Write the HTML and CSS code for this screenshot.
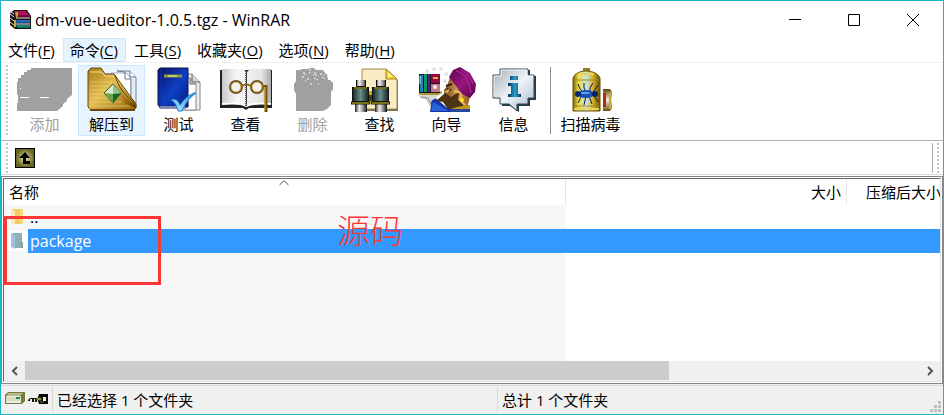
FILE: index.html
```html
<!DOCTYPE html>
<html lang="zh-CN">
<head>
<meta charset="utf-8">
<meta name="viewport" content="width=device-width, initial-scale=1">
<title>dm-vue-ueditor-1.0.5.tgz - WinRAR</title>
<link rel="stylesheet" href="styles.css">
</head>
<body>
<svg class="defs" width="0" height="0" aria-hidden="true">
  <defs>
    <linearGradient id="gold" x1="0" y1="0" x2="1" y2="1"><stop offset="0" stop-color="#a87a14"/><stop offset=".45" stop-color="#e3bf55"/><stop offset="1" stop-color="#8f640a"/></linearGradient>
    <linearGradient id="flap" x1="0" y1="0" x2="1" y2="0"><stop offset="0" stop-color="#e8c660"/><stop offset=".5" stop-color="#a87412"/><stop offset="1" stop-color="#5e3b00"/></linearGradient>
    <linearGradient id="blue" x1="0" y1="0" x2="1" y2="1"><stop offset="0" stop-color="#0a1568"/><stop offset=".55" stop-color="#0d3fc4"/><stop offset="1" stop-color="#071a80"/></linearGradient>
    <linearGradient id="tick" x1="0" y1="1" x2="1" y2="0"><stop offset="0" stop-color="#c5ecff"/><stop offset="1" stop-color="#1589dd"/></linearGradient>
    <linearGradient id="page" x1="0" y1="0" x2="1" y2="0"><stop offset="0" stop-color="#c9c9c9"/><stop offset=".3" stop-color="#f6f6f6"/><stop offset=".8" stop-color="#e6e6e6"/><stop offset="1" stop-color="#aaa"/></linearGradient>
    <linearGradient id="metal" x1="0" y1="0" x2="1" y2="0"><stop offset="0" stop-color="#222"/><stop offset=".35" stop-color="#eee"/><stop offset=".6" stop-color="#aaa"/><stop offset="1" stop-color="#111"/></linearGradient>
    <linearGradient id="teal" x1="0" y1="0" x2="1" y2="0"><stop offset="0" stop-color="#182c2d"/><stop offset=".5" stop-color="#6b8d8c"/><stop offset="1" stop-color="#172829"/></linearGradient>
    <linearGradient id="tank" x1="0" y1="0" x2="1" y2="0"><stop offset="0" stop-color="#78620b"/><stop offset=".2" stop-color="#eedc3c"/><stop offset=".5" stop-color="#cce2e1"/><stop offset=".75" stop-color="#d6ae20"/><stop offset="1" stop-color="#665008"/></linearGradient>
    <linearGradient id="cap" x1="0" y1="0" x2="0" y2="1"><stop offset="0" stop-color="#5d4708"/><stop offset=".5" stop-color="#eef1e4"/><stop offset="1" stop-color="#6b5209"/></linearGradient>
    <linearGradient id="silver" x1="0" y1="0" x2="1" y2="1"><stop offset="0" stop-color="#a5adb5"/><stop offset=".5" stop-color="#eef3f9"/><stop offset="1" stop-color="#a9b9cc"/></linearGradient>
    <linearGradient id="info" x1="0" y1="0" x2="1" y2="0"><stop offset="0" stop-color="#052e58"/><stop offset=".55" stop-color="#27a2ca"/><stop offset="1" stop-color="#07385d"/></linearGradient>
    <linearGradient id="hat" x1="0" y1="0" x2="1" y2="1"><stop offset="0" stop-color="#5f0650"/><stop offset=".5" stop-color="#96157d"/><stop offset="1" stop-color="#570449"/></linearGradient>
    <linearGradient id="skin" x1="0" y1="0" x2="1" y2="0"><stop offset="0" stop-color="#6e4a1c"/><stop offset=".5" stop-color="#d09544"/><stop offset="1" stop-color="#8f611f"/></linearGradient>
    <radialGradient id="olive"><stop offset="0" stop-color="#f0edae"/><stop offset="1" stop-color="#676321"/></radialGradient>
  </defs>
</svg>

<div class="window">
  <header class="titlebar">
    <svg class="app-icon" viewBox="0 0 21 20" aria-hidden="true">
      <path d="M4 0h13l4 6v13H5L0 15V3z" fill="#181515"/>
      <path d="M4 1h12l3 4H7z" fill="#b11358"/><path d="M7 5h13v2H7z" fill="#7d003b"/>
      <path d="M6 8h14" stroke="#e6e1e1"/><path d="M6 10h14v3H6z" fill="#174c9b"/><path d="M7 11h13" stroke="#328ed0"/>
      <path d="M6 14h14" stroke="#e4eee9"/><path d="M6 15h14v3H7z" fill="#08665d"/><path d="M7 16h13" stroke="#20a391"/>
      <path d="M0 4l4 3M0 8l4 3M0 12l4 3M1 2l3 2" stroke="#e3dcd5"/><path d="M5 2h3v4l-2 2zM4 10h2v7H4z" fill="#c1aa31"/>
    </svg>
    <h1 class="title">dm-vue-ueditor-1.0.5.tgz - WinRAR</h1>
    <div class="window-controls">
      <button type="button" aria-label="最小化"><svg viewBox="0 0 12 12"><path d="M0 5.500h12"/></svg></button>
      <button type="button" aria-label="最大化"><svg viewBox="0 0 12 12"><path d="M.5.5h11v11H.5z"/></svg></button>
      <button type="button" aria-label="关闭"><svg viewBox="0 0 12 12"><path d="M0 0l12 12M12 0L0 12"/></svg></button>
    </div>
  </header>

  <nav class="menu" aria-label="菜单">
    <button type="button">文件(<u>F</u>)</button>
    <button type="button" class="active">命令(<u>C</u>)</button>
    <button type="button">工具(<u>S</u>)</button>
    <button type="button">收藏夹(<u>O</u>)</button>
    <button type="button">选项(<u>N</u>)</button>
    <button type="button">帮助(<u>H</u>)</button>
  </nav>

  <div class="toolbar" role="toolbar">
    <span class="grip"></span>
    <button type="button" class="tool" disabled>
      <svg viewBox="0 0 66 46"><path d="M19 1h41v27l-5 4v2l-4 3v2l-6 5H5v-7l1-2v-6l-1-3V15h1v-4h3V8h3V5h3V3h4z" fill="#a0a0a0"/><path d="M8 30.500h9M28 30.500h9M8 21.500h1" stroke="#fff"/></svg>
      <span>添加</span>
    </button>
    <button type="button" class="tool hover">
      <svg viewBox="0 0 66 46">
        <path d="M32 6h15l5 6v28H32z" fill="#fff" stroke="#9aa5b1"/><path d="M38 4h13l6 6v30h-5V12l-6-7z" fill="#e5edf6" stroke="#738393"/><path d="M51 4v6h6M46 5v7h6" fill="#fff" stroke="#6b7783"/>
        <path d="M9 4l3-3h10l4 6h9l22 30v4l-3 2H12l-3-3z" fill="url(#gold)" stroke="#684809"/>
        <path d="M11 5h12l3 4h9" stroke="#f8df88" fill="none"/><path d="M11 15h22M11 19h18M11 23h15M11 27h15M11 31h18M11 35h31M11 39h40" stroke="#fbe28a" opacity=".5"/>
        <path d="M35 9c2 11 9 22 22 29v3l-11-4-12-15z" fill="url(#flap)"/><path d="M36 8c3 12 10 21 21 29" fill="none" stroke="#603c00"/>
        <path d="M25 26l9-9 8 9-8 10z" fill="#dcead2" stroke="#3c5b28"/><path d="M34 17l8 9-8 1z" fill="#8fc48b"/><path d="M34 27l8-1-8 10z" fill="#126629"/><path d="M26 26l8 1v9z" fill="#6ca63f"/>
        <path d="M11 43h45" stroke="#6a4709" stroke-width="2"/>
      </svg>
      <span>解压到</span>
    </button>
    <button type="button" class="tool">
      <svg viewBox="0 0 66 46">
        <path d="M37 7h9l8 8v28H37z" fill="#ededed" stroke="#888"/><path d="M35 11h9l6 6v26H35z" fill="#fff" stroke="#888"/><path d="M44 11v6h6M46 7v8h8" fill="#d6d6d6" stroke="#666"/>
        <path d="M12 3l2-2h28v39H14l-2-2z" fill="url(#blue)" stroke="#07104d"/><path d="M15 2v37" stroke="#1733a8"/><path d="M13 39h27v2H14z" fill="#e8eafa" stroke="#1a2470"/>
        <path d="M18 9h18" stroke="#8f9b35" stroke-width="3"/><path d="M22 9h9" stroke="#f8ffa5"/>
        <path d="M25 33c4-2 7 0 9 5 4-6 9-10 14-12h2c-7 5-11 11-14 18h-4c-1-5-3-9-7-11z" fill="url(#tick)" stroke="#1b80cf"/>
      </svg>
      <span>测试</span>
    </button>
    <button type="button" class="tool">
      <svg viewBox="0 0 66 46">
        <path d="M7 3h52v38H36l-3 2-3-2H7z" fill="#222"/><path d="M9 2h22l2 3v33c-6-2-14-1-24-1zM34 5l3-3h21v35c-10 0-18-1-24 1z" fill="url(#page)"/>
        <path d="M9 37c10-1 19-1 24 2 7-3 15-3 25-2" fill="none" stroke="#fff" stroke-width="2"/>
        <path d="M33 4v36" stroke="#555" stroke-width="2" stroke-dasharray="1 1"/>
        <g fill="#f2f2f2" stroke="#625125" stroke-width="2"><circle cx="23" cy="20" r="6"/><circle cx="44" cy="20" r="6"/></g><circle cx="23" cy="20" r="5" fill="none" stroke="#d2a326"/><circle cx="44" cy="20" r="5" fill="none" stroke="#d2a326"/>
        <path d="M29 19c3-2 6-2 9 0M50 19h4" fill="none" stroke="#8c6610" stroke-width="2"/><path d="M53 18v27" stroke="#785006" stroke-width="3"/><path d="M52 20v22" stroke="#d8ae30"/>
      </svg>
      <span>查看</span>
    </button>
    <button type="button" class="tool" disabled>
      <svg viewBox="0 0 66 46"><path d="M16 3h5V2h7l2-1h4l2 2h7l3 4h1l1 6h2l3 3v6l-2 3v13l-4 4-4 2H16V27l-2-4v-6l2-3z" fill="#a0a0a0"/><path d="M23 6h2v2M29 3h3M29 5l2 2M35 5v3h2M22 10h2M27 12h3M34 11l4 2M40 7h3M42 10l3 2M30 17h2M38 17h1M33 8h1M44 8h1M25 14h1" fill="none" stroke="#fff" stroke-dasharray="2 1"/></svg>
      <span>删除</span>
    </button>
    <button type="button" class="tool">
      <svg viewBox="0 0 66 46">
        <path d="M17 4l3 40h31V13" fill="#756d53"/><path d="M15 2h24l11 10v30H15z" fill="#f9ecc4" stroke="#9c8a54"/><path d="M39 2v10h11z" fill="#f7d52c" stroke="#a58511"/><path d="M41 5v5h5" fill="#fff29a"/>
        <path d="M20 24h8v13h-8z" fill="#c4ac18"/><path d="M21 28h6v6h-6z" fill="#423e17"/>
        <g id="lens"><path d="M9 13h10v7h3v16H5V20h4z" fill="#10100e"/><path d="M10 13h8v6h-8zM8 37h12v8H8z" fill="url(#metal)"/><path d="M6 22h15v12H6z" fill="url(#teal)"/><path d="M4 36h19" stroke="#1c1a08" stroke-width="3"/><path d="M5 36h17M7 21h13" stroke="#d7c728"/></g>
        <use href="#lens" x="20"/>
      </svg>
      <span>查找</span>
    </button>
    <button type="button" class="tool">
      <svg viewBox="0 0 66 46">
        <g fill="#e6e6e6"><circle cx="13" cy="4" r="2"/><circle cx="20" cy="2" r="2"/><circle cx="27" cy="2" r="2"/><circle cx="32" cy="7" r="2"/><circle cx="31" cy="14" r="2"/></g>
        <path d="M18 29l6 4 9 8 6-5 17 3v6H16z" fill="#1434a8"/><path d="M19 35l9 5 7 4H17z" fill="#2b62d8"/>
        <path d="M4 27l5-1 8 1h9l-4 4-5 3v8l-5-9-6-2z" fill="#d7d7d3"/><path d="M7 30l7 1 3 7" fill="none" stroke="#8e8e86"/>
        <path d="M5 26l3 1h16l4-2" fill="none" stroke="#aa9738" stroke-width="2"/>
        <path d="M5 7h21v19H5z" fill="#14181c"/><path d="M6 8h3v17H6z" fill="#2c7fb4"/><path d="M10 7h3v18h-3z" fill="#0a9a5f"/><path d="M14 7h2v18h-2z" fill="#5c1b8f"/><path d="M17 7h9v9h-9z" fill="#98073e"/><path d="M17 17h9v8h-9z" fill="#bd7b8c"/><path d="M19 11h5" stroke="#d2bd35" stroke-width="2"/><circle cx="21" cy="20" r="2" fill="#f4eaea"/><path d="M6 9v8" stroke="#b8e2ee"/>
        <path d="M36 10l20 20-3 11-16 2-6-9-1-11 3-4z" fill="url(#skin)"/>
        <path d="M31 26l6 4 8-5-1 8 6 5-8 5-9-2-4-6-7-1z" fill="#4d3413"/><path d="M40 24l8 2-2 7 5 5" fill="none" stroke="#efb967" stroke-width="2"/><path d="M32 19l6-2M33 22l4 1" stroke="#332111" stroke-width="2"/><path d="M30 25l4 1 2-5" fill="#e1ae56"/>
        <path d="M35 10l4-7 7-3 10 6 6 11-1 8-5 6-8-4z" fill="url(#hat)"/><path d="M42 4c9 2 13 10 15 22M47 3c6 3 10 8 12 14" stroke="#b22d98" fill="none"/>
        <circle cx="48" cy="33" r="2" fill="#ffe329"/><path d="M37 42l6-2 13-2v4z" fill="#c59a14"/><path d="M36 42h20v3H36z" fill="#2546a3"/>
      </svg>
      <span>向导</span>
    </button>
    <button type="button" class="tool">
      <svg viewBox="0 0 66 46">
        <path d="M21 3h28v6h6v24h-6v6H38v6l-9-6h-8z" fill="#203c48"/><path d="M19 2h28v6h6v23h-6v6H36v7l-8-7h-9v-6h-7V8h7z" fill="url(#silver)" stroke="#324850"/><path d="M13 30V9h7V3h26v6h6" fill="none" stroke="#fff" opacity=".8"/>
        <path d="M29 9h8v4h-8zM27 16h10v11h3v3H27v-3h3v-8h-3z" fill="url(#info)"/>
      </svg>
      <span>信息</span>
    </button>
    <span class="separator"></span>
    <button type="button" class="tool">
      <svg viewBox="0 0 66 46">
        <path d="M25 1h7v5h-7z" fill="#9c8014"/><path d="M15 12c0-4 5-8 13-8s14 4 14 8v32H15z" fill="url(#tank)" stroke="#655308"/><path d="M20 7h16M16 42h25" stroke="#e8d55c" stroke-width="2"/><path d="M16 13h25M16 39h25" stroke="#9b8a28"/>
        <path d="M20 17l2 5 3 3M26 16v5l2 4M35 16l-3 5v5M40 18l-5 7M20 36l3-6 3-2M26 38l2-9M34 37l-3-8M40 35l-4-6" fill="none" stroke="#0a1c5c"/>
        <ellipse cx="28" cy="27" rx="8" ry="4" fill="#1a4fb7"/><ellipse cx="27" cy="26" rx="5" ry="1" fill="#5ca6e3"/><circle cx="37" cy="27" r="3" fill="#092265"/><circle cx="20" cy="27" r="3" fill="#0a286d"/>
        <path d="M45 22h7l2 3v16l-2 3h-7z" fill="url(#cap)"/><path d="M45 26h3v14h-3z" fill="#b4271c"/><path d="M52 25v17" stroke="#c8a72c" stroke-width="2"/>
      </svg>
      <span>扫描病毒</span>
    </button>
  </div>

  <div class="address">
    <span class="grip"></span>
    <button type="button" class="up" aria-label="向上"><svg viewBox="0 0 20 20"><path d="M0 0h20v20H0z"/><path d="M1 1h18v18H1z" fill="url(#olive)"/><path d="M10 4L4 10h4v6h7v-3h-4v-3h4z"/></svg></button>
    <input class="path" type="text" aria-label="路径">
    <span class="grip"></span>
  </div>

  <main class="frame">
    <div class="list">
      <table class="files">
        <colgroup><col class="col-name"><col><col class="col-packed"></colgroup>
        <thead>
          <tr>
            <th scope="col">名称<svg class="sort" viewBox="0 0 10 6" aria-hidden="true"><path d="M.5 5L5 .7 9.500 5"/></svg></th>
            <th scope="col" class="number">大小</th>
            <th scope="col" class="packed">压缩后大小</th>
          </tr>
        </thead>
        <tbody>
          <tr>
            <td><div class="file"><svg class="folder" viewBox="0 0 20 20" aria-hidden="true"><path d="M4 2h10v15H6z" fill="#f3cc65"/><path d="M12 2h3v15h-3z" fill="#f6d87d"/><path d="M3 2l4 2v14l-4-2z" fill="#ffe9a6"/></svg><span class="name">..</span></div></td><td></td><td></td>
          </tr>
          <tr class="selected">
            <td><div class="file"><svg class="folder" viewBox="0 0 20 20" aria-hidden="true"><path d="M4 2h10v15H6z" fill="#8eb1b1"/><path d="M12 11h3v6h-3z" fill="#84aaa6"/><path d="M3 2l4 2v14l-4-2z" fill="#9fc5de"/></svg><span class="name">package</span></div></td><td></td><td></td>
          </tr>
          <tr class="filler"><td></td><td></td><td></td></tr>
        </tbody>
      </table>
      <div class="scrollbar">
        <button type="button" aria-label="向左滚动"><svg viewBox="0 0 8 10"><path d="M6 1L2 5l4 4"/></svg></button>
        <div class="track"><div class="thumb"></div></div>
        <button type="button" aria-label="向右滚动"><svg viewBox="0 0 8 10"><path d="M2 1l4 4-4 4"/></svg></button>
      </div>
    </div>
    <div class="mark-box"></div>
    <div class="mark-text">源码</div>
  </main>

  <footer class="status">
    <div class="status-icons">
      <svg class="drive" viewBox="0 0 20 13" aria-hidden="true"><path d="M0 3l3-3h17v9l-3 3H0z" fill="#777a3d"/><path d="M1 4h15v7H1z" fill="#d9dbbd"/><path d="M2 4h13M2 10h14" stroke="#fff"/><path d="M3 1h15l-2 2H2z" fill="#b8bc86"/><path d="M11 6h4" stroke="#198b67" stroke-width="2"/></svg>
      <svg class="key" viewBox="0 0 20 10" aria-hidden="true"><path d="M11 0h9v10h-9l-1-3V3z" fill="#080808"/><path d="M15 3h3v4h-3z" fill="#eee"/><path d="M10 4H2L0 6v1h2V5h2v3h2V5h1v3h2V6h2z" fill="#171706"/><path d="M9 4h4v2H9zM12 8h4" fill="#b5b165" stroke="#77742c"/></svg>
    </div>
    <div class="status-cell selected-count">已经选择 1 个文件夹</div>
    <div class="status-cell">总计 1 个文件夹</div>
    <svg class="resize" viewBox="0 0 11 11" aria-hidden="true"><path d="M8 0h3v3H8zM4 4h3v3H4zM8 4h3v3H8zM0 8h3v3H0zM4 8h3v3H4zM8 8h3v3H8z"/></svg>
  </footer>
</div>
</body>
</html>
```
FILE: styles.css
```css
* {
  box-sizing: border-box;
}

body {
  margin: 0;
  font: 15px/20px "Open Sans", "Noto Sans CJK SC", sans-serif;
  color: #000;
  background: #fff;
}

button {
  margin: 0;
  padding: 0;
  border: 0;
  background: none;
  font: inherit;
  color: inherit;
}

svg {
  display: block;
}

.defs {
  position: absolute;
}

.window {
  display: flex;
  flex-direction: column;
  min-height: 100vh;
  border: 1px solid #1cb5c1;
}

.titlebar {
  display: flex;
  align-items: center;
  height: 37px;
  padding: 0 1px 0 9px;
}

.app-icon {
  width: 21px;
  height: 20px;
}

.title {
  flex: 1;
  margin: 0 0 0 4px;
  font-size: 16px;
  font-weight: 400;
}

.window-controls {
  display: flex;
  align-self: stretch;
}

.window-controls button {
  display: grid;
  place-items: center;
  width: 59px;
}

.window-controls svg {
  width: 12px;
  height: 12px;
  fill: none;
  stroke: #000;
}

.menu {
  display: flex;
  gap: 1px;
  height: 24px;
}

.menu button {
  padding: 0 6px;
  border: 1px solid transparent;
}

.menu button + button {
  padding-right: 7px;
}

.menu u {
  text-underline-offset: 2px;
}

.menu .active {
  border-color: #cce8ff;
  background: #e5f3ff;
}

.toolbar {
  display: flex;
  padding: 2px 0 4px 3px;
  border-top: 1px solid #f0f0f0;
  border-bottom: 1px solid #b0b0b0;
}

.grip {
  width: 4px;
  margin-right: 3px;
  background: conic-gradient(#c4c4c4 0 25%, transparent 0) 0 0 / 4px 4px;
}

.tool {
  display: flex;
  flex-direction: column;
  align-items: center;
  width: 67px;
  height: 71px;
  padding-top: 1px;
  border: 1px solid transparent;
}

.tool svg {
  width: 66px;
  height: 46px;
}

.tool span {
  margin-top: 1px;
  white-space: nowrap;
}

.tool:disabled {
  color: #a0a0a0;
}

.tool.hover {
  border-color: #cce8ff;
  background: #e8f4ff;
}

.separator {
  width: 1px;
  margin: 2px 6px 2px 3px;
  background: #8d8d8d;
}

.address {
  display: flex;
  height: 34px;
  padding: 2px 0 1px 3px;
  border-bottom: 1px solid #dcdcdc;
}

.up {
  align-self: center;
  margin: 0 2px 0 4px;
}

.up svg {
  width: 20px;
  height: 20px;
}

.path {
  flex: 1;
  min-width: 0;
  margin-right: 2px;
  border: 0;
  border-right: 1px solid #b0b0b0;
  outline: 0;
  font: inherit;
}

.address .grip:last-child {
  margin-right: 4px;
}

.frame {
  position: relative;
  display: flex;
  flex: 1;
  margin-top: 1px;
  padding: 1px;
  border: 1px solid #828790;
}

.list {
  display: flex;
  flex: 1;
  flex-direction: column;
  min-width: 0;
  border: 1px solid #e3e3e3;
  border-top-color: #696969;
  border-left-color: #696969;
}

.files {
  width: 100%;
  height: 182px;
  table-layout: fixed;
  border-collapse: collapse;
}

.col-name {
  width: 60%;
}

.col-packed {
  width: 10%;
}

.files th {
  position: relative;
  height: 26px;
  padding: 0 5px;
  border-right: 1px solid #e5e5e5;
  font-weight: 400;
  text-align: left;
  white-space: nowrap;
}

.files .number {
  text-align: right;
}

.files .packed {
  padding: 0 0 0 19px;
  border-right: 0;
  overflow: hidden;
}

.sort {
  position: absolute;
  top: 1px;
  left: 49%;
  width: 10px;
  height: 6px;
  fill: none;
  stroke: #555;
}

.files td {
  height: 24px;
  padding: 0;
}

.files td:first-child {
  background: #f7f7f7;
}

.file {
  display: flex;
  align-items: center;
  height: 24px;
}

.folder {
  width: 20px;
  height: 20px;
  margin-left: 4px;
}

.name {
  flex: 1;
  padding-left: 2px;
  font-size: 16px;
  line-height: 24px;
}

.selected .name,
.selected td + td {
  color: #fff;
  background: #3399ff;
}

.selected .folder {
  background: #fff;
}

.files .filler td {
  height: auto;
}

.scrollbar {
  display: flex;
  height: 20px;
  background: #f0f0f0;
}

.scrollbar button {
  display: grid;
  place-items: center;
  width: 21px;
}

.scrollbar svg {
  width: 8px;
  height: 10px;
  fill: none;
  stroke: #555;
  stroke-width: 2;
}

.track {
  flex: 1;
}

.thumb {
  width: 72%;
  height: 19px;
  background: #cdcdcd;
}

.mark-box {
  position: absolute;
  top: 39px;
  left: 2px;
  width: 157px;
  height: 69px;
  border: 3px solid #fa3636;
}

.mark-text {
  position: absolute;
  top: 35px;
  left: 335px;
  font: 300 33px/40px "Liberation Serif", "Noto Sans CJK SC", serif;
  color: #fa3636;
}

.status {
  display: flex;
  height: 30px;
  padding: 3px 2px 2px 4px;
  background: linear-gradient(#f0f0f0 1px, #d9d9d9 1px 2px, #f0f0f0 2px);
}

.status-icons {
  display: flex;
  align-items: center;
  gap: 3px;
  padding: 0 4px 2px 0;
}

.drive {
  width: 20px;
  height: 13px;
}

.key {
  width: 20px;
  height: 10px;
}

.status-cell {
  flex: 1;
  padding-left: 4px;
  border-left: 1px solid #d7d7d7;
  line-height: 26px;
}

.selected-count {
  flex: 0 0 50%;
  max-width: 445px;
}

.resize {
  align-self: flex-end;
  width: 11px;
  height: 11px;
  fill: #bfbfbf;
}
```
